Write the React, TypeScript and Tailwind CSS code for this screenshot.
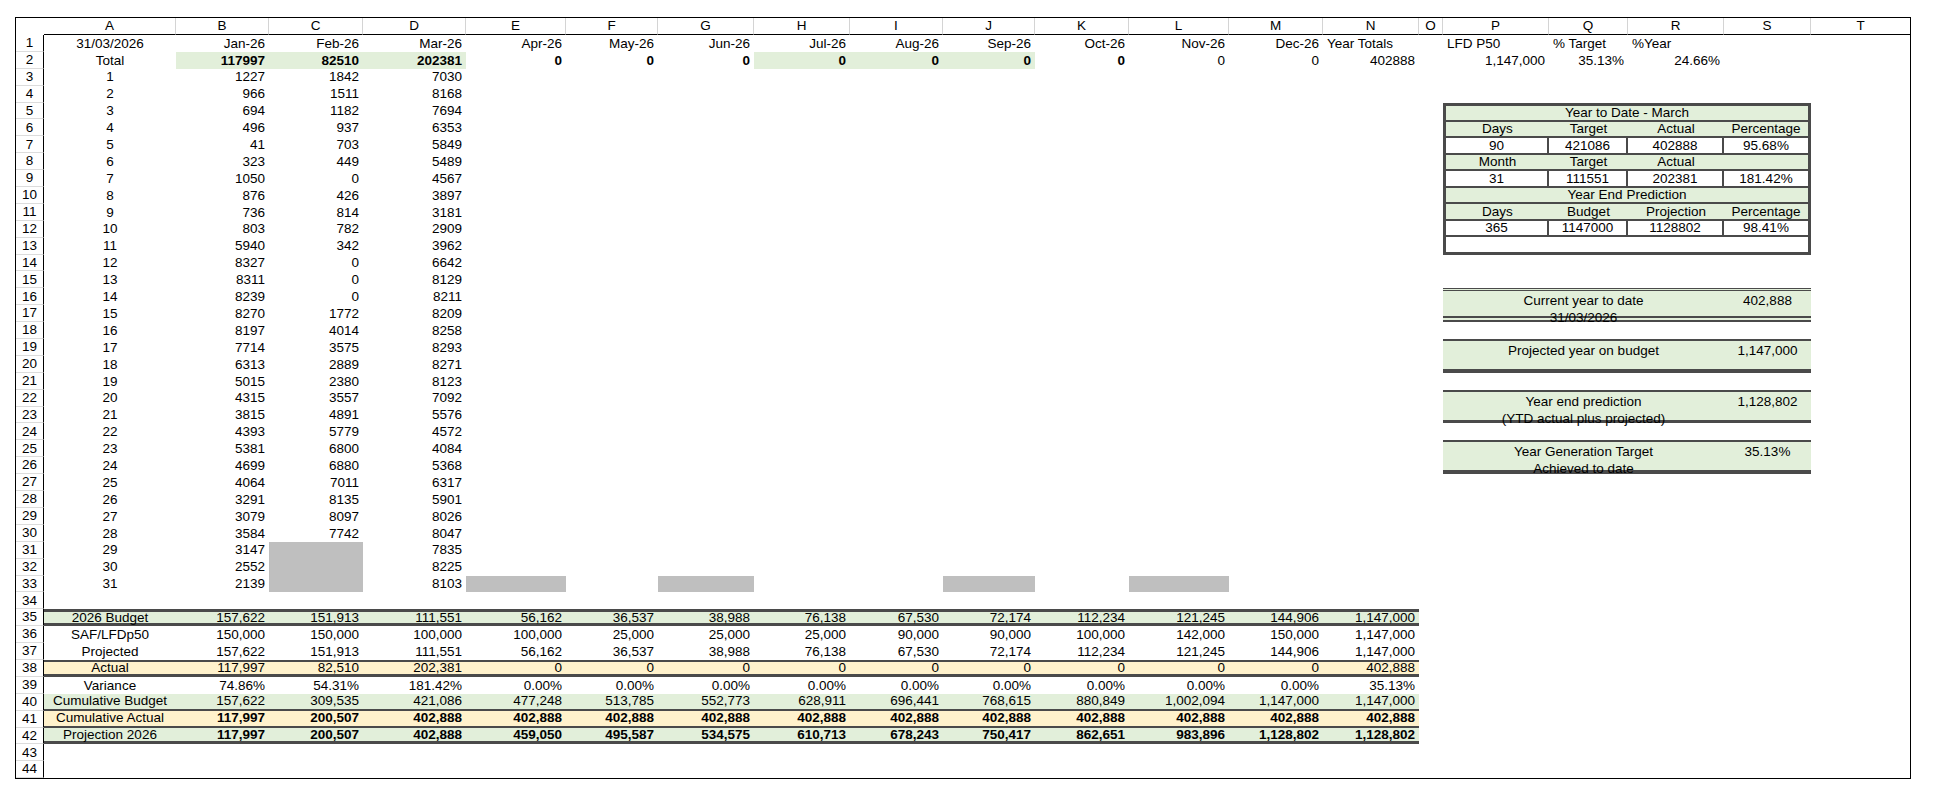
import React from "react";

const COLS = ["A","B","C","D","E","F","G","H","I","J","K","L","M","N","O","P","Q","R","S","T"];
const MONTHS = ["Jan-26","Feb-26","Mar-26","Apr-26","May-26","Jun-26","Jul-26","Aug-26","Sep-26","Oct-26","Nov-26","Dec-26"];
const B = [1227,966,694,496,41,323,1050,876,736,803,5940,8327,8311,8239,8270,8197,7714,6313,5015,4315,3815,4393,5381,4699,4064,3291,3079,3584,3147,2552,2139];
const C = [1842,1511,1182,937,703,449,0,426,814,782,342,0,0,0,1772,4014,3575,2889,2380,3557,4891,5779,6800,6880,7011,8135,8097,7742];
const D = [7030,8168,7694,6353,5849,5489,4567,3897,3181,2909,3962,6642,8129,8211,8209,8258,8293,8271,8123,7092,5576,4572,4084,5368,6317,5901,8026,8047,7835,8225,8103];

const Z9 = Array(9).fill("0");
const P9 = Array(9).fill("0.00%");
const BOTTOM: Record<number, { label: string; vals: string[]; cls: string; bold?: boolean }> = {
  35: { label: "2026 Budget", vals: ["157,622","151,913","111,551","56,162","36,537","38,988","76,138","67,530","72,174","112,234","121,245","144,906","1,147,000"], cls: "bg-[#e2efda] border-t-[3px] border-b-[3px] border-[#4a4a4a]" },
  36: { label: "SAF/LFDp50", vals: ["150,000","150,000","100,000","100,000","25,000","25,000","25,000","90,000","90,000","100,000","142,000","150,000","1,147,000"], cls: "" },
  37: { label: "Projected", vals: ["157,622","151,913","111,551","56,162","36,537","38,988","76,138","67,530","72,174","112,234","121,245","144,906","1,147,000"], cls: "" },
  38: { label: "Actual", vals: ["117,997","82,510","202,381",...Z9,"402,888"], cls: "bg-[#fff2cc] border-t-2 border-b-[3px] border-[#4a4a4a]" },
  39: { label: "Variance", vals: ["74.86%","54.31%","181.42%",...P9,"35.13%"], cls: "" },
  40: { label: "Cumulative Budget", vals: ["157,622","309,535","421,086","477,248","513,785","552,773","628,911","696,441","768,615","880,849","1,002,094","1,147,000","1,147,000"], cls: "bg-[#e2efda] border-b-2 border-[#4a4a4a]" },
  41: { label: "Cumulative Actual", vals: Array(13).fill("402,888").map((v, i) => (i === 0 ? "117,997" : i === 1 ? "200,507" : v)), cls: "bg-[#fff2cc] border-b-2 border-[#4a4a4a]", bold: true },
  42: { label: "Projection 2026", vals: ["117,997","200,507","402,888","459,050","495,587","534,575","610,713","678,243","750,417","862,651","983,896","1,128,802","1,128,802"], cls: "bg-[#e2efda] border-b-[3px] border-[#4a4a4a]", bold: true },
};

const PANEL_ROWS = new Set([5,6,7,8,9,10,11,12,13,16,17,19,20,22,23,25,26]);
const GREEN = "bg-[#e2efda]";
const GREY = "bg-[#bfbfbf]";

type Cell = { t?: string; a?: "r" | "c" | "l"; b?: boolean; cls?: string };

function getCell(r: number, c: number): Cell {
  if (r === 1) {
    if (c === 0) return { t: "31/03/2026", a: "c" };
    if (c >= 1 && c <= 12) return { t: MONTHS[c - 1], a: "r" };
    if (c === 13) return { t: "Year Totals", a: "l" };
    if (c === 15) return { t: "LFD P50", a: "l" };
    if (c === 16) return { t: "% Target", a: "l" };
    if (c === 17) return { t: "%Year", a: "l" };
    return {};
  }
  if (r === 2) {
    const vals = ["117997","82510","202381","0","0","0","0","0","0","0","0","0","402888"];
    if (c === 0) return { t: "Total", a: "c" };
    if (c >= 1 && c <= 13) {
      const green = (c >= 1 && c <= 3) || (c >= 7 && c <= 9);
      return { t: vals[c - 1], a: "r", b: c <= 10, cls: green ? GREEN : "" };
    }
    if (c === 15) return { t: "1,147,000", a: "r" };
    if (c === 16) return { t: "35.13%", a: "r" };
    if (c === 17) return { t: "24.66%", a: "r" };
    return {};
  }
  if (r >= 3 && r <= 33) {
    const i = r - 3;
    if (c === 0) return { t: String(i + 1), a: "c" };
    if (c === 1) return { t: String(B[i]), a: "r" };
    if (c === 2) return i < C.length ? { t: String(C[i]), a: "r" } : { cls: GREY };
    if (c === 3) return { t: String(D[i]), a: "r" };
    if (r === 33 && (c === 4 || c === 6 || c === 9 || c === 11)) return { cls: GREY };
    return {};
  }
  if (r === 28) {
    if (c === 15) return { t: "Non generating days", a: "l", b: true };
    if (c === 17) return { t: "4", a: "r", b: true, cls: "border-t border-t-black border-b-[3px] border-b-black border-double" };
    return {};
  }
  const bt = BOTTOM[r];
  if (bt && c <= 13) {
    if (c === 0) return { t: bt.label, a: "c", b: false, cls: bt.cls };
    return { t: bt.vals[c - 1], a: "r", b: bt.bold, cls: bt.cls };
  }
  return {};
}

const font = { fontFamily: '"Liberation Sans", Arial, sans-serif' };

function Box1() {
  const hdr = "flex items-center justify-center " + GREEN;
  const row4 = "grid grid-cols-[103px_79px_96px_1fr] border-b-2 border-[#4a4a4a]";
  const hc = "flex items-center justify-center";
  const vc = "flex items-center justify-center bg-white border-r-2 border-[#4a4a4a]";
  return (
    <div className="col-[17/21] row-[6/15] border-[3px] border-[#4a4a4a] flex flex-col text-[13.5px] leading-none">
      <div className={"flex-1 border-b-2 border-[#4a4a4a] " + hdr}>Year to Date - March</div>
      <div className={"flex-1 " + row4 + " " + GREEN}>
        <div className={hc}>Days</div><div className={hc}>Target</div><div className={hc}>Actual</div><div className={hc}>Percentage</div>
      </div>
      <div className={"flex-1 " + row4 + " bg-white"}>
        <div className={vc}>90</div><div className={vc}>421086</div><div className={vc}>402888</div><div className={hc}>95.68%</div>
      </div>
      <div className={"flex-1 " + row4 + " " + GREEN}>
        <div className={hc}>Month</div><div className={hc}>Target</div><div className={hc}>Actual</div><div className={hc}></div>
      </div>
      <div className={"flex-1 " + row4 + " bg-white"}>
        <div className={vc}>31</div><div className={vc}>111551</div><div className={vc}>202381</div><div className={hc}>181.42%</div>
      </div>
      <div className={"flex-1 border-b-2 border-[#4a4a4a] " + hdr}>Year End Prediction</div>
      <div className={"flex-1 " + row4 + " " + GREEN}>
        <div className={hc}>Days</div><div className={hc}>Budget</div><div className={hc}>Projection</div><div className={hc}>Percentage</div>
      </div>
      <div className={"flex-1 " + row4 + " bg-white"}>
        <div className={vc}>365</div><div className={vc}>1147000</div><div className={vc}>1128802</div><div className={hc}>98.41%</div>
      </div>
      <div className="flex-1 bg-white"></div>
    </div>
  );
}

function SumBox({ pos, lines, value }: { pos: string; lines: string[]; value: string }) {
  return (
    <div className={pos + " " + GREEN + " flex text-[13.5px] leading-[17px] border-[#4a4a4a]"}>
      <div className="w-[281px] flex flex-col items-center pt-[1px]">
        {lines.map((l) => (<div key={l}>{l}</div>))}
      </div>
      <div className="flex-1 flex justify-center pt-[1px]">{value}</div>
    </div>
  );
}

export default function App() {
  const cells: React.ReactNode[] = [];
  // header
  cells.push(<div key="corner" className="bg-white" />);
  COLS.forEach((c, i) => {
    cells.push(
      <div key={"h" + c} className={"flex items-center justify-center border-b border-b-black " + (i < 19 ? "border-r border-r-[#d4d4d4]" : "")}>{c}</div>
    );
  });
  for (let r = 1; r <= 44; r++) {
    cells.push(
      <div key={"n" + r} className="flex items-center justify-center border-r border-r-black border-b border-b-[#dcdcdc]">{r}</div>
    );
    for (let c = 0; c < 20; c++) {
      if (PANEL_ROWS.has(r) && c >= 15 && c <= 18) continue;
      const cell = getCell(r, c);
      const al = cell.a === "r" ? "justify-end" : cell.a === "c" ? "justify-center" : "justify-start";
      cells.push(
        <div
          key={r + "-" + c}
          className={"flex items-center whitespace-nowrap px-[4px] " + al + " " + (cell.b ? "font-bold " : "") + (cell.cls || "")}
        >
          {cell.t}
        </div>
      );
    }
  }
  return (
    <div className="w-[1938px] h-[794px] bg-white pt-[17px] pl-[15px]" style={font}>
      <div className="w-[1896px] border border-black">
        <div className="grid grid-cols-[28px_132px_93px_94px_103px_100px_92px_96px_96px_93px_92px_94px_100px_94px_96px_24px_106px_79px_96px_87px_99px] grid-rows-[17px_repeat(44,16.9px)] text-[13.5px] leading-none text-black">
          <Box1 />
          <SumBox pos="col-[17/21] row-[17/19] border-t-[3px] border-b-[6px] border-double" lines={["Current year to date", "31/03/2026"]} value="402,888" />
          <SumBox pos="col-[17/21] row-[20/22] border-t-2 border-b-[4px]" lines={["Projected year on budget"]} value="1,147,000" />
          <SumBox pos="col-[17/21] row-[23/25] border-t-2 border-b-[3px]" lines={["Year end prediction", "(YTD actual plus projected)"]} value="1,128,802" />
          <SumBox pos="col-[17/21] row-[26/28] border-t-2 border-b-[4px]" lines={["Year Generation Target", "Achieved to date"]} value="35.13%" />
          {cells}
        </div>
      </div>
    </div>
  );
}
